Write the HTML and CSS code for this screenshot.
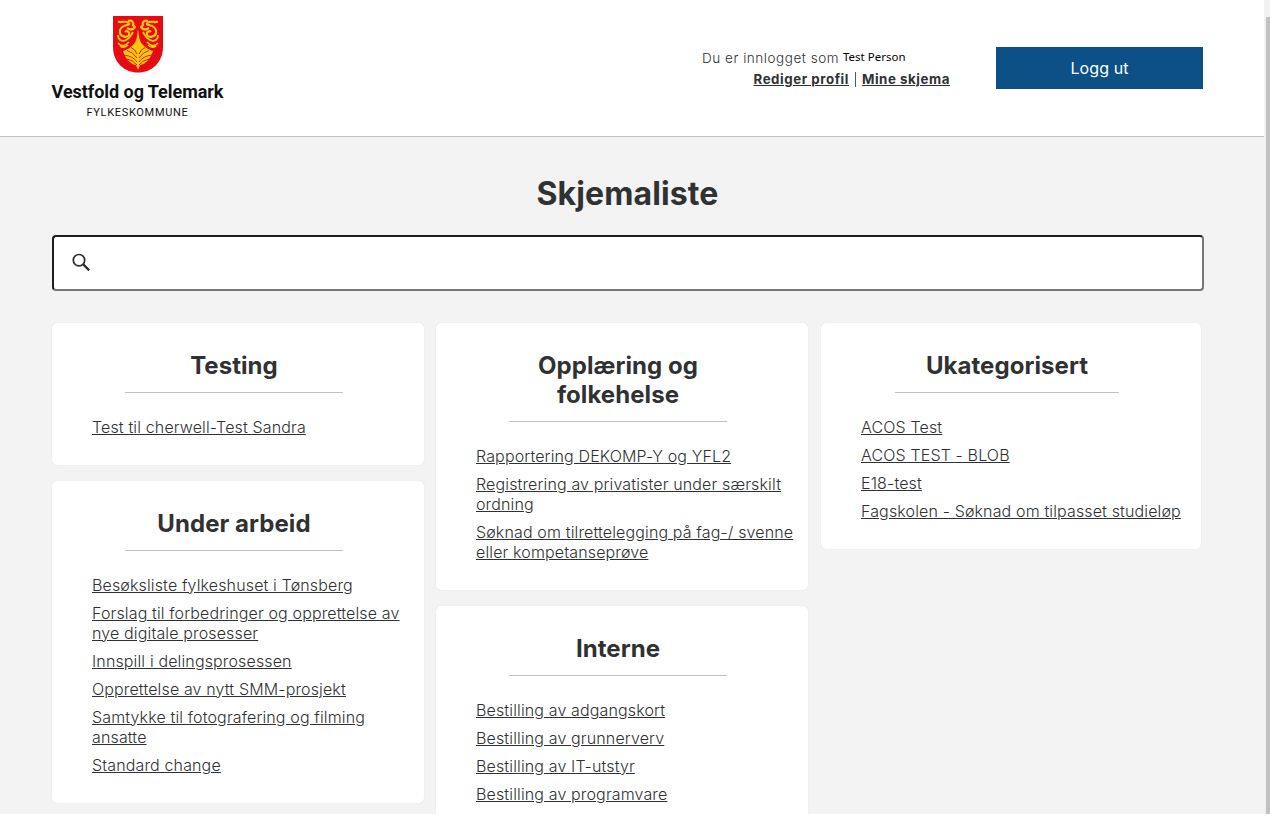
FILE: index.html
```html
<!DOCTYPE html>
<html lang="no">
<head>
<meta charset="utf-8">
<title>Skjemaliste</title>
<link rel="stylesheet" href="styles.css">
</head>
<body>
<div class="window">
<div class="page">
  <header class="header">
    <div class="brand">
      <svg class="shield" width="50" height="57" viewBox="0 0 50 57">
        <path d="M0 0H50V31C50 46 39 56.500 25 56.500C11 56.500 0 46 0 31Z" fill="#e60a14"/>
        <g fill="none" stroke="#fdc70c" stroke-linejoin="round">
          <g id="half">
            <path d="M5 5.500C8 7 10 5 14 6C17 7 17 8.500 14 9C9 10 6 13 7 17C8 21 14 22 16 19C17 16 14 14 12 16" stroke-width="2.200"/>
            <path d="M15 5C19 4 21 6 20 9L22 11C20 14 17 14 14 12" stroke-width="2.300"/>
            <path d="M5 19C5 24 9 26 13 24C17 22 19 18 20 16" stroke-width="1.800"/>
            <path d="M5 27C9 32 13 29 16 26M7 30C10 32 13 31 15 29" stroke-width="1.700"/>
          </g>
          <use href="#half" transform="translate(50 0) scale(-1 1)"/>
        </g>
        <path d="M25 13C26 20 26 25 30 29C33 32 36 34 40 35C38 42 33 48 27 49L25 54L23 49C17 48 12 42 10 35C14 34 17 32 20 29C24 25 24 20 25 13Z" fill="#fdc70c"/>
        <path d="M24 46Q20 40 11 39M24 42Q20 36 14 34.500M24 38Q22 33 18 31.500M24 49Q20 44 14 43M26 46Q30 40 39 39M26 42Q30 36 36 34.500M26 38Q28 33 32 31.500M26 49Q30 44 36 43" fill="none" stroke="#e60a14" stroke-width=".9"/>
      </svg>
      <div class="brand-name">Vestfold og Telemark</div>
      <div class="brand-sub">FYLKESKOMMUNE</div>
    </div>
    <div class="user">
      <div class="user-line"><span class="user-label">Du er innlogget som</span><span class="user-name">Test Person</span></div>
      <div class="user-links"><a>Rediger profil</a><i></i><a>Mine skjema</a></div>
    </div>
    <div class="logout"><span>Logg ut</span></div>
  </header>
  <main class="main">
    <h1>Skjemaliste</h1>
    <div class="search">
      <svg width="20" height="20" viewBox="0 0 20 20" fill="none" stroke="#2b2c30"><circle cx="7" cy="7.200" r="5.700" stroke-width="1.700"/><path d="M11.200 11.400L17.200 17.400" stroke-width="2.200"/></svg>
    </div>
    <div class="columns">
      <div class="column">
        <section class="card"><h2>Testing</h2><hr>
          <ul><li><a>Test til cherwell-Test Sandra</a></li></ul></section>
        <section class="card"><h2>Under arbeid</h2><hr>
          <ul>
            <li><a>Besøksliste fylkeshuset i Tønsberg</a></li>
            <li><a>Forslag til forbedringer og opprettelse av<br>nye digitale prosesser</a></li>
            <li><a>Innspill i delingsprosessen</a></li>
            <li><a>Opprettelse av nytt SMM-prosjekt</a></li>
            <li><a>Samtykke til fotografering og filming<br>ansatte</a></li>
            <li><a>Standard change</a></li>
          </ul></section>
      </div>
      <div class="column">
        <section class="card"><h2>Opplæring og<br>folkehelse</h2><hr>
          <ul>
            <li><a>Rapportering DEKOMP-Y og YFL2</a></li>
            <li><a>Registrering av privatister under særskilt<br>ordning</a></li>
            <li><a>Søknad om tilrettelegging på fag-/ svenne<br>eller kompetanseprøve</a></li>
          </ul></section>
        <section class="card"><h2>Interne</h2><hr>
          <ul>
            <li><a>Bestilling av adgangskort</a></li>
            <li><a>Bestilling av grunnerverv</a></li>
            <li><a>Bestilling av IT-utstyr</a></li>
            <li><a>Bestilling av programvare</a></li>
          </ul></section>
      </div>
      <div class="column wide">
        <section class="card"><h2>Ukategorisert</h2><hr>
          <ul>
            <li><a>ACOS Test</a></li>
            <li><a>ACOS TEST - BLOB</a></li>
            <li><a>E18-test</a></li>
            <li><a>Fagskolen - Søknad om tilpasset studieløp</a></li>
          </ul></section>
      </div>
    </div>
  </main>
</div>
<div class="scrollbar"><div class="thumb"></div></div>
</div>
</body>
</html>
```
FILE: styles.css
```css
* { box-sizing: border-box; }
body { margin: 0; background: #fff; color: #303133; font-family: Inter, "Liberation Sans", sans-serif; overflow: hidden; }
.window { display: flex; height: 814px; overflow: hidden; }
.page { width: 1264px; height: 814px; overflow: hidden; background: #f3f3f3; }
.scrollbar { width: 6px; padding: 17px 0 0 2px; background: #f1f1f1; }
.thumb { height: 100%; background: #c1c1c1; }
.header { display: flex; height: 137px; padding-left: 51px; background: #fff; border-bottom: 1px solid #c1c1c1; }
.brand { display: flex; flex-direction: column; align-items: center; width: 173px; padding-top: 16px; color: #111; white-space: nowrap; }
.shield { display: block; flex: none; }
.brand-name { margin-top: 9px; font: 700 18px/20px Roboto, sans-serif; letter-spacing: -0.05px; }
.brand-sub { margin-top: 3px; font: 400 11px/15px Roboto, sans-serif; letter-spacing: 0.7px; }
.user { display: flex; flex-direction: column; align-items: flex-end; width: 726px; padding-top: 48px; font-size: 13.5px; line-height: 21px; white-space: nowrap; }
.user-line { display: flex; align-items: center; width: 248px; height: 21px; }
.user-label { width: 141px; font-weight: 300; letter-spacing: 0.54px; }
.user-name { padding-bottom: 4px; color: #000; font: 400 11.5px/18px "Noto Sans", sans-serif; }
.user-links { display: flex; align-items: center; font-weight: 650; font-size: 13.3px; letter-spacing: 0.56px; }
.user-links i { width: 1px; height: 15px; margin: 0 6px; background: #555; }
a { text-decoration: underline; }
.logout { display: flex; align-items: center; justify-content: center; width: 207px; height: 42px; margin: 47px 0 0 46px; background: #0d5087; color: #fff; font-size: 16px; letter-spacing: 0.1px; }
.main { padding: 36px 61px 0 52px; }
h1 { margin: 0; font-size: 32px; line-height: 42px; font-weight: 650; letter-spacing: 0.1px; text-align: center; }
.search { display: flex; align-items: center; width: 1152px; height: 56px; margin-top: 20px; padding-left: 18px; background: #fff; border: 2px solid; border-color: #1d1d1d #767676 #767676 #1d1d1d; border-radius: 4px; }
.columns { display: flex; align-items: flex-start; gap: 12px; margin-top: 32px; }
.column { display: flex; flex: none; flex-direction: column; gap: 16px; width: 372px; }
.wide { width: 380px; margin-left: 1px; }
.card { padding: 28px 8px 28px 0; background: #fff; border-radius: 5px; box-shadow: 0 0 1px rgba(0,0,0,.15); }
h2 { margin: 0; font-size: 24px; line-height: 29px; font-weight: 650; letter-spacing: 0.06px; text-align: center; }
hr { width: 60%; height: 1px; margin: 12px auto 24px; border: 0; background: #c1c1c1; }
ul { display: flex; flex-direction: column; gap: 8px; margin: 0; padding: 0 0 0 40px; list-style: none; font-size: 16px; line-height: 20px; font-weight: 300; letter-spacing: 0.14px; white-space: nowrap; }
```
